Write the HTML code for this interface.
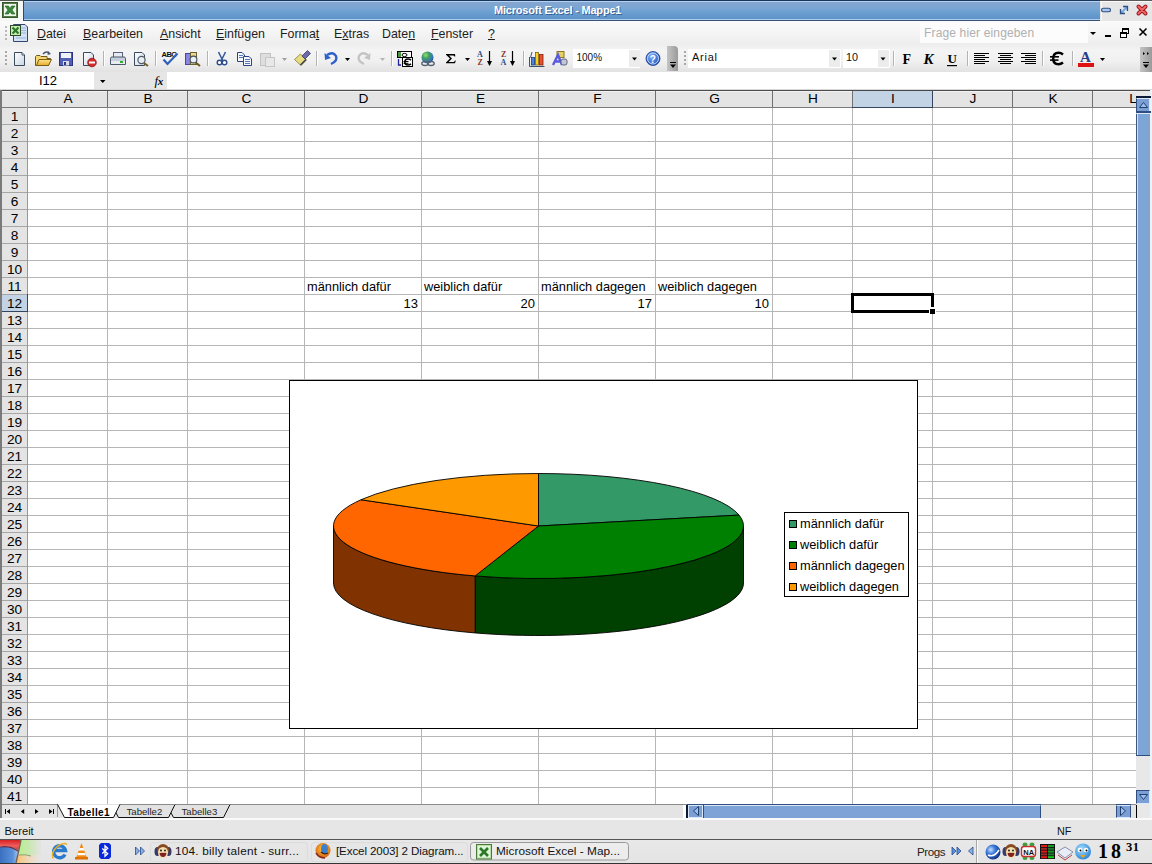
<!DOCTYPE html><html><head><meta charset="utf-8"><style>
*{margin:0;padding:0;box-sizing:border-box}
html,body{width:1152px;height:864px;overflow:hidden;background:#fff;font-family:"Liberation Sans",sans-serif}
.a{position:absolute}
.t{position:absolute;white-space:pre;line-height:1}
</style></head><body>
<div class="a" style="left:0;top:0;width:1152px;height:21px;background:#f4f7f4"></div>
<div class="a" style="left:0;top:0;width:24px;height:1px;background:#505a50"></div>
<div class="a" style="left:23px;top:0;width:1077px;height:21px;background:linear-gradient(#1c3458 0,#1c3458 1px,#b0d4f8 1px,#b0d4f8 2px,#86a6cf 2px,#7aa6d4 8px,#6a9ed0 13px,#5f94ca 18px,#6a90c8 19px,#a8cef2 19px,#a8cef2 20px,#3a5276 20px);border-left:1px solid #2a4876"></div>
<svg class="a" style="left:2px;top:2px" width="16" height="16" viewBox="0 0 16 16">
<rect x="0.5" y="0.5" width="15" height="15" fill="#eef8ea" stroke="#34582a"/>
<rect x="1.5" y="1.5" width="13" height="13" fill="none" stroke="#5a7a4a"/>
<path d="M3 4 L6.5 4 L8 6.5 L9.5 4 L13 4 L10 8 L13 12 L9.5 12 L8 9.5 L6.5 12 L3 12 L6 8 Z" fill="#3a8a3a" stroke="#1e5a1e" stroke-width="0.6"/>
</svg>
<div class="t" style="left:494px;top:5px;font-size:11px;font-weight:bold;color:#fff;text-shadow:1px 1px 0 #3a5f94;letter-spacing:-0.2px">Microsoft Excel - Mappe1</div>
<svg class="a" style="left:1100px;top:0" width="52" height="21" viewBox="1100 0 52 21">
<rect x="1100" y="0" width="52" height="21" fill="#e6e6e6"/>
<rect x="1100" y="0" width="52" height="1" fill="#5a5a5a"/>
<rect x="1100" y="1" width="52" height="1" fill="#fafafa"/><rect x="1101" y="1" width="1" height="19" fill="#fafafa"/>
<rect x="1101.5" y="8.3" width="9" height="3.4" rx="1.7" fill="#a8c8f0" stroke="#2e4e80" stroke-width="1.1"/>
<path d="M1120.5 9 L1120.5 13.5 L1125 13.5 Z" fill="#a8d0f8"/><path d="M1127.5 11 L1127.5 6.5 L1123 6.5 Z" fill="#a8d0f8"/>
<path d="M1121 13 L1127 7" stroke="#78a8e0" stroke-width="2"/>
<path d="M1120.5 9 L1120.5 13.5 L1125 13.5 M1123 6.5 L1127.5 6.5 L1127.5 11" fill="none" stroke="#2e4e80" stroke-width="1.3"/>
<path d="M1138.5 6.5 L1145.5 13.5 M1145.5 6.5 L1138.5 13.5" stroke="#a01820" stroke-width="4" stroke-linecap="round"/>
<path d="M1138.5 6.5 L1145.5 13.5 M1145.5 6.5 L1138.5 13.5" stroke="#f06868" stroke-width="2" stroke-linecap="round"/>
</svg>
<div class="a" style="left:0;top:21px;width:1152px;height:24px;background:linear-gradient(#fafafa,#f4f4f4 50%,#ededed)"></div>
<div class="a" style="left:5px;top:26px;width:2px;height:2px;background:#b8b8b8"></div>
<div class="a" style="left:5px;top:30px;width:2px;height:2px;background:#b8b8b8"></div>
<div class="a" style="left:5px;top:34px;width:2px;height:2px;background:#b8b8b8"></div>
<div class="a" style="left:5px;top:38px;width:2px;height:2px;background:#b8b8b8"></div>
<svg class="a" style="left:9px;top:23px" width="20" height="20" viewBox="0 0 20 20">
<path d="M4.5 1.5 L16 1.5 L18.5 4 L18.5 18.5 L4.5 18.5 Z" fill="#d4e2f6" stroke="#34466e"/>
<path d="M12 5h5M12 7.5h5M12 10h5M7 15h10" stroke="#9ab4dc" stroke-width="1"/>
<rect x="1.5" y="2.5" width="10" height="10" fill="#c8ecb0" stroke="#2e4a26"/>
<path d="M3.5 4.5 L9.5 10.5 M9.5 4.5 L3.5 10.5" stroke="#2a7a2a" stroke-width="2.2"/>
</svg>
<div class="t" style="left:37px;top:28px;font-size:12.4px;color:#1e1e1e"><u>D</u>atei</div>
<div class="t" style="left:83px;top:28px;font-size:12.4px;color:#1e1e1e"><u>B</u>earbeiten</div>
<div class="t" style="left:160px;top:28px;font-size:12.4px;color:#1e1e1e"><u>A</u>nsicht</div>
<div class="t" style="left:216px;top:28px;font-size:12.4px;color:#1e1e1e"><u>E</u>infügen</div>
<div class="t" style="left:280px;top:28px;font-size:12.4px;color:#1e1e1e">Forma<u>t</u></div>
<div class="t" style="left:334px;top:28px;font-size:12.4px;color:#1e1e1e">E<u>x</u>tras</div>
<div class="t" style="left:382px;top:28px;font-size:12.4px;color:#1e1e1e">Date<u>n</u></div>
<div class="t" style="left:431px;top:28px;font-size:12.4px;color:#1e1e1e"><u>F</u>enster</div>
<div class="t" style="left:488px;top:28px;font-size:12.4px;color:#1e1e1e"><u>?</u></div>
<div class="a" style="left:920px;top:23px;width:168px;height:20px;background:#fcfcfc"></div>
<div class="t" style="left:924px;top:27px;font-size:12px;letter-spacing:0.15px;color:#b0b0b0">Frage hier eingeben</div>
<svg class="a" style="left:1086px;top:22px" width="66" height="22" viewBox="0 0 66 22">
<path d="M4 10 L10 10 L7 13 Z" fill="#000"/>
<rect x="19" y="13" width="6" height="2" fill="#000"/>
<rect x="36.5" y="6.5" width="6" height="5" fill="none" stroke="#000"/><rect x="36" y="6" width="7" height="2" fill="#000"/>
<rect x="34.5" y="10.5" width="6" height="5" fill="#fff" stroke="#000"/><rect x="34" y="10" width="7" height="2" fill="#000"/>
<path d="M53.5 6.5 L60.5 13.5 M60.5 6.5 L53.5 13.5" stroke="#000" stroke-width="1.6"/>
</svg>
<div class="a" style="left:0;top:45px;width:1152px;height:27px;background:linear-gradient(#eeeeee,#f4f4f4 20%,#f0f0f0 60%,#e2e2e2)"></div>
<svg class="a" style="left:0;top:45px" width="1152" height="27" viewBox="0 45 1152 27">
<defs><linearGradient id="pg" x1="0" y1="0" x2="1" y2="1"><stop offset="0" stop-color="#ffffff"/><stop offset="1" stop-color="#c9d6e4"/></linearGradient><linearGradient id="fold" x1="0" y1="0" x2="0" y2="1"><stop offset="0" stop-color="#fde58a"/><stop offset="1" stop-color="#e9a92c"/></linearGradient><radialGradient id="glob" cx="0.35" cy="0.3" r="0.8"><stop offset="0" stop-color="#90e070"/><stop offset="0.35" stop-color="#40a060"/><stop offset="0.7" stop-color="#3a78b8"/><stop offset="1" stop-color="#1a4a8a"/></radialGradient><radialGradient id="help" cx="0.4" cy="0.35" r="0.7"><stop offset="0" stop-color="#7fb0ff"/><stop offset="1" stop-color="#1c4fb8"/></radialGradient><linearGradient id="hdl" x1="0" y1="0" x2="1" y2="0"><stop offset="0" stop-color="#c4c4c4"/><stop offset="1" stop-color="#9a9a9a"/></linearGradient></defs>
<rect x="5" y="51" width="2" height="2" fill="#a8a8a8"/>
<rect x="5" y="55" width="2" height="2" fill="#a8a8a8"/>
<rect x="5" y="59" width="2" height="2" fill="#a8a8a8"/>
<rect x="5" y="63" width="2" height="2" fill="#a8a8a8"/>
<rect x="684" y="51" width="2" height="2" fill="#a8a8a8"/>
<rect x="684" y="55" width="2" height="2" fill="#a8a8a8"/>
<rect x="684" y="59" width="2" height="2" fill="#a8a8a8"/>
<rect x="684" y="63" width="2" height="2" fill="#a8a8a8"/>
<rect x="103" y="51" width="1" height="15" fill="#b4b4b4"/><rect x="104" y="51" width="1" height="15" fill="#fff"/>
<rect x="155" y="51" width="1" height="15" fill="#b4b4b4"/><rect x="156" y="51" width="1" height="15" fill="#fff"/>
<rect x="207" y="51" width="1" height="15" fill="#b4b4b4"/><rect x="208" y="51" width="1" height="15" fill="#fff"/>
<rect x="316" y="51" width="1" height="15" fill="#b4b4b4"/><rect x="317" y="51" width="1" height="15" fill="#fff"/>
<rect x="391" y="51" width="1" height="15" fill="#b4b4b4"/><rect x="392" y="51" width="1" height="15" fill="#fff"/>
<rect x="523" y="51" width="1" height="15" fill="#b4b4b4"/><rect x="524" y="51" width="1" height="15" fill="#fff"/>
<rect x="893" y="51" width="1" height="15" fill="#b4b4b4"/><rect x="894" y="51" width="1" height="15" fill="#fff"/>
<rect x="967" y="51" width="1" height="15" fill="#b4b4b4"/><rect x="968" y="51" width="1" height="15" fill="#fff"/>
<rect x="1042" y="51" width="1" height="15" fill="#b4b4b4"/><rect x="1043" y="51" width="1" height="15" fill="#fff"/>
<rect x="1072" y="51" width="1" height="15" fill="#b4b4b4"/><rect x="1073" y="51" width="1" height="15" fill="#fff"/>
<path d="M14.5 52.5 L22 52.5 L24.5 55 L24.5 65.5 L14.5 65.5 Z" fill="url(#pg)" stroke="#3b4b5e"/>
<path d="M22 52.5 L22 55 L24.5 55" fill="#fff" stroke="#3b4b5e"/>
<path d="M35.5 56.5 L35.5 65.5 L48.5 65.5 L50.5 58.5 L47 58.5 L47 56.5 L41 56.5 L40 55.5 L36.5 55.5 Z" fill="#f5d66e" stroke="#6e5a1e"/>
<path d="M36.5 65.5 L39 59.5 L51.5 59.5 L48.5 65.5 Z" fill="url(#fold)" stroke="#7a5e14"/>
<path d="M43 54 Q46 50.5 49 53" fill="none" stroke="#4a5a6a" stroke-width="1.5"/><path d="M48 51 L51 54 L47.5 55 Z" fill="#4a5a6a"/>
<rect x="59.5" y="52.5" width="13" height="13" fill="#5160b4" stroke="#2c3680"/>
<rect x="61" y="53" width="10" height="5" fill="#f0f2fa"/>
<rect x="63" y="61" width="6" height="4.5" fill="#d8dcea"/><rect x="64" y="62" width="2" height="3" fill="#2c3680"/>
<path d="M83.5 52.5 L91 52.5 L93.5 55 L93.5 65.5 L83.5 65.5 Z" fill="url(#pg)" stroke="#3b4b5e"/>
<circle cx="92" cy="62.5" r="4.3" fill="#d42a2a" stroke="#8a1010" stroke-width="0.8"/><rect x="89" y="61.5" width="6" height="2" fill="#fff"/>
<rect x="113.5" y="52.5" width="9" height="5" fill="#e6eaf2" stroke="#5a6478"/>
<path d="M110.5 58.5 Q110.5 57 112 57 L124 57 Q125.5 57 125.5 58.5 L125.5 64.5 L110.5 64.5 Z" fill="#c5cedd" stroke="#4d586c"/>
<rect x="111" y="61" width="14" height="3" fill="#e8ecf2"/><rect x="120" y="61" width="3" height="2" fill="#2fb030"/>
<path d="M134.5 52.5 L142 52.5 L144.5 55 L144.5 65.5 L134.5 65.5 Z" fill="url(#pg)" stroke="#3b4b5e"/>
<line x1="144" y1="63" x2="148" y2="66" stroke="#7a6020" stroke-width="2"/>
<circle cx="141.5" cy="60" r="3.6" fill="#e8eef4" stroke="#505a68" stroke-width="1.2"/>
<text x="161.5" y="56.5" font-family="Liberation Sans" font-weight="bold" font-size="7.6" fill="#111" letter-spacing="-0.6">ABC</text>
<path d="M163.5 59.5 L167.5 64 L177.5 53.5" fill="none" stroke="#3060b8" stroke-width="2.2"/>
<rect x="185.5" y="53.5" width="5" height="11" fill="#8a86e0" stroke="#4a48a0"/>
<rect x="190.5" y="52.5" width="6" height="12" fill="#e8d890" stroke="#6a6030"/>
<line x1="195" y1="62" x2="200" y2="66" stroke="#6a5a18" stroke-width="2"/>
<circle cx="193.5" cy="59.5" r="3.4" fill="#e6eef6" stroke="#4a5060" stroke-width="1.1"/>
<path d="M218.5 52 L223 61 M225.5 52 L221 61" stroke="#3a5a9a" stroke-width="1.6"/>
<circle cx="219.5" cy="62.5" r="2.3" fill="#fff" stroke="#2c4c8c" stroke-width="1.4"/><circle cx="224.5" cy="62.5" r="2.3" fill="#fff" stroke="#2c4c8c" stroke-width="1.4"/>
<path d="M237.5 52.5 L242 52.5 L244.5 55 L244.5 61.5 L237.5 61.5 Z" fill="#f4f8fc" stroke="#2c4480"/>
<path d="M243.5 56.5 L249 56.5 L251.5 59 L251.5 65.5 L243.5 65.5 Z" fill="#f4f8fc" stroke="#2c4480"/>
<path d="M239 55.5h4M239 57.5h4M245 59.5h5M245 61.5h5M245 63.5h5" stroke="#5a76b8" stroke-width="1" shape-rendering="crispEdges"/>
<rect x="260.5" y="53.5" width="10" height="12" fill="#dedede" stroke="#c2c2c2"/><rect x="265.5" y="57.5" width="9" height="9" fill="#e8e8e8" stroke="#c6c6c6"/>
<path d="M282 58 L287 58 L284.5 61 Z" fill="#a0a0a0"/>
<path d="M345 58 L350 58 L347.5 61 Z" fill="#000"/>
<path d="M380 58 L385 58 L382.5 61 Z" fill="#b4b4b4"/>
<path d="M465 58 L470 58 L467.5 61 Z" fill="#000"/>
<path d="M1100 58 L1105 58 L1102.5 61 Z" fill="#000"/>
<path d="M294.5 59.5 L300.5 54 L306.5 60 L301 65.5 Z" fill="#e8dc80" stroke="#8a7a30" stroke-width="0.8"/>
<path d="M301 65.5 L306.5 60 L305.5 59 L300 64.5 Z" fill="#3a3a50"/>
<path d="M302 56 L307.5 50.5 L310.5 53.5 L305 59 Z" fill="#6c6aa8" stroke="#3a3a6a" stroke-width="0.8"/>
<path d="M327 55 Q333 51 336 56 Q338 61 331 64" fill="none" stroke="#2f62c8" stroke-width="2.4"/>
<path d="M324.5 53 L325 60 L331 58 Z" fill="#2f62c8"/>
<path d="M368 55 Q362 51 359 56 Q357 61 364 64" fill="none" stroke="#c4c4c4" stroke-width="2.4"/>
<path d="M370.5 53 L370 60 L364 58 Z" fill="#c4c4c4"/>
<rect x="397.5" y="51.5" width="14" height="6" fill="#fff" stroke="#000"/><rect x="398" y="52" width="3" height="5" fill="#4a9a40"/><ellipse cx="404.5" cy="55" rx="2.5" ry="1.6" fill="none" stroke="#000"/>
<rect x="402.5" y="57.5" width="10" height="9" fill="#fff" stroke="#000"/>
<path d="M411 60 Q409.5 59 408 59 Q404.8 59 404.8 62 Q404.8 65 408 65 Q409.5 65 411 64" fill="none" stroke="#000" stroke-width="1.6"/><rect x="403.5" y="61" width="5" height="1" fill="#000"/><rect x="403.5" y="62.8" width="5" height="1" fill="#000"/>
<path d="M398.5 59 L398.5 65 L401 65" fill="none" stroke="#2020a0" stroke-width="1.3"/>
<circle cx="427.5" cy="57.5" r="6" fill="url(#glob)"/>
<ellipse cx="425" cy="63.5" rx="3.2" ry="2" fill="none" stroke="#556070" stroke-width="1.3"/><ellipse cx="431" cy="63.5" rx="3.2" ry="2" fill="none" stroke="#556070" stroke-width="1.3"/>
<path d="M446 54 L455 54 L455.3 56.5 L454.5 56.5 L453.5 55.5 L449 55.5 L452 58.6 L448.5 62 L454 62 L455 60.5 L455.8 60.5 L455 63.3 L446 63.3 L446 62.5 L450 58.6 L446 54.8 Z" fill="#000"/>
<text x="477" y="57.3" font-family="Liberation Serif" font-weight="bold" font-size="8" fill="#2c4a8a">A</text>
<text x="477.5" y="65.3" font-family="Liberation Serif" font-weight="bold" font-size="8" fill="#8a3a2a">Z</text>
<path d="M489.5 51 L489.5 65" stroke="#000" stroke-width="1.2"/><path d="M487 61 L489.5 66 L492 61" fill="#000"/>
<text x="501" y="57.3" font-family="Liberation Serif" font-weight="bold" font-size="8" fill="#8a3a2a">Z</text>
<text x="500.5" y="65.3" font-family="Liberation Serif" font-weight="bold" font-size="8" fill="#2c4a8a">A</text>
<path d="M512.5 51 L512.5 65" stroke="#000" stroke-width="1.2"/><path d="M510 61 L512.5 66 L515 61" fill="#000"/>
<path d="M529.5 57 L529.5 66.5 L544.5 66.5" fill="none" stroke="#40506a"/><path d="M530.5 57.5 L532 52" stroke="#40506a"/>
<rect x="531.5" y="57.5" width="3" height="7.5" fill="#4a88e0" stroke="#1a3a7a" stroke-width="0.8"/><rect x="535.5" y="52.5" width="3" height="12.5" fill="#f8d020" stroke="#806010" stroke-width="0.8"/><rect x="539.5" y="54.5" width="3.5" height="10.5" fill="#e85030" stroke="#802010" stroke-width="0.8"/>
<rect x="557" y="51.5" width="7" height="6" fill="#e6d060" stroke="#8a7a20"/>
<path d="M553 65 L558 55 L562 65 M555 61.5 L560.5 61.5" fill="none" stroke="#5a5ae0" stroke-width="2.4"/>
<rect x="561" y="59" width="6" height="6" rx="2" fill="#c0c8d8" stroke="#606878"/>
<rect x="573" y="49" width="67" height="19" fill="#fff"/><rect x="629" y="50" width="11" height="17" fill="#ececec"/>
<path d="M632 57.5 L637 57.5 L634.5 60.5 Z" fill="#000"/>
<text x="576.5" y="61" font-family="Liberation Sans" font-size="11" textLength="25.5" lengthAdjust="spacingAndGlyphs" fill="#111">100%</text>
<circle cx="653" cy="58.5" r="7" fill="url(#help)" stroke="#1a3c8c" stroke-width="0.8"/>
<circle cx="653" cy="58.5" r="5.5" fill="none" stroke="#cfe0ff" stroke-width="0.9"/>
<text x="649.7" y="62.5" font-family="Liberation Sans" font-weight="bold" font-size="10" fill="#fff">?</text>
<path d="M667 46 L674 46 Q678 46 678 50 L678 71 L667 71 Z" fill="url(#hdl)"/>
<rect x="670" y="62" width="6" height="1" fill="#000"/><path d="M670 64.5 L676 64.5 L673 68 Z" fill="#000"/>
<rect x="688" y="49" width="153" height="19" fill="#fff"/><rect x="829" y="50" width="11" height="17" fill="#ececec"/>
<path d="M832 57.5 L837 57.5 L834.5 60.5 Z" fill="#000"/>
<text x="692" y="61" font-family="Liberation Sans" font-size="11" textLength="25" lengthAdjust="spacing" fill="#111">Arial</text>
<rect x="843" y="49" width="47" height="19" fill="#fff"/><rect x="878" y="50" width="11" height="17" fill="#ececec"/>
<path d="M880.5 57.5 L885.5 57.5 L883 60.5 Z" fill="#000"/>
<text x="846" y="61" font-family="Liberation Sans" font-size="11" textLength="12" lengthAdjust="spacingAndGlyphs" fill="#111">10</text>
<text x="902.5" y="64" font-family="Liberation Serif" font-weight="bold" font-size="14" fill="#000">F</text>
<text x="923.5" y="64" font-family="Liberation Serif" font-weight="bold" font-style="italic" font-size="15" fill="#000">K</text>
<text x="947.5" y="63" font-family="Liberation Serif" font-weight="bold" font-size="13" fill="#000">U</text><rect x="947" y="65" width="10" height="1.2" fill="#000"/>
<rect x="974" y="53" width="15" height="1" fill="#000"/><rect x="974" y="55" width="11" height="1" fill="#000"/><rect x="974" y="57" width="15" height="1" fill="#000"/><rect x="974" y="59" width="11" height="1" fill="#000"/><rect x="974" y="61" width="15" height="1" fill="#000"/><rect x="974" y="63" width="11" height="1" fill="#000"/>
<rect x="998" y="53" width="15" height="1" fill="#000"/><rect x="1000" y="55" width="11" height="1" fill="#000"/><rect x="998" y="57" width="15" height="1" fill="#000"/><rect x="1000" y="59" width="11" height="1" fill="#000"/><rect x="998" y="61" width="15" height="1" fill="#000"/><rect x="1000" y="63" width="11" height="1" fill="#000"/>
<rect x="1021" y="53" width="15" height="1" fill="#000"/><rect x="1025" y="55" width="11" height="1" fill="#000"/><rect x="1021" y="57" width="15" height="1" fill="#000"/><rect x="1025" y="59" width="11" height="1" fill="#000"/><rect x="1021" y="61" width="15" height="1" fill="#000"/><rect x="1025" y="63" width="11" height="1" fill="#000"/>
<path d="M1063 54.5 Q1061 52.8 1058.5 52.8 Q1053.2 52.8 1053.2 58.5 Q1053.2 64.2 1058.5 64.2 Q1061 64.2 1063 62.5" fill="none" stroke="#000" stroke-width="2.4"/>
<rect x="1050" y="56" width="9" height="1.6" fill="#000"/><rect x="1050" y="59.3" width="8.5" height="1.6" fill="#000"/>
<text x="1080" y="62" font-family="Liberation Serif" font-weight="bold" font-size="15" fill="#283c8c">A</text>
<rect x="1078" y="63" width="16" height="4" fill="#e01010"/>
<path d="M1140 47 L1152 47 L1152 72 L1140 72 Q1140 72 1140 70 Z" fill="url(#hdl)"/>
<path d="M1143 52 L1145 53.5 L1143 55 Z M1147 52 L1149 53.5 L1147 55 Z" fill="#000"/>
<rect x="1143" y="62" width="6" height="1" fill="#000"/><path d="M1143 64.5 L1149 64.5 L1146 68 Z" fill="#000"/>
</svg>
<div class="a" style="left:0;top:72px;width:1152px;height:18px;background:#fff"></div>
<div class="a" style="left:94px;top:72px;width:73px;height:17px;background:#e6e6e6"></div>
<div class="a" style="left:0;top:89px;width:1152px;height:1px;background:#d8d8d8"></div>
<div class="t" style="left:39px;top:74px;font-size:13px;color:#000">I12</div>
<svg class="a" style="left:100px;top:80px" width="6" height="4"><path d="M0 0 L5.5 0 L2.75 3 Z" fill="#000"/></svg>
<div class="t" style="left:154.5px;top:74px;font-size:13px;font-style:italic;font-family:'Liberation Serif',serif;color:#000">f<span style="font-size:11px;font-weight:bold;margin-left:-0.5px">x</span></div>
<svg class="a" style="left:0;top:90px" width="1152" height="714" viewBox="0 90 1152 714" shape-rendering="crispEdges">
<rect x="0" y="91" width="1136" height="16" fill="#e4e4e4"/>
<rect x="0" y="91" width="1136" height="1" fill="#f2f2f2"/>
<rect x="0" y="108" width="27" height="696" fill="#e4e4e4"/>
<rect x="853" y="91" width="79" height="16" fill="#c3d3e6"/>
<rect x="2" y="295" width="25" height="16" fill="#c3d3e6"/>
<rect x="0" y="90" width="1151" height="1" fill="#4a4a4a"/>
<rect x="0" y="90" width="2" height="714" fill="#7a7a7a"/>
<rect x="2" y="124" width="25" height="1" fill="#a6a6a6"/>
<rect x="28" y="124" width="1108" height="1" fill="#b6b6b6"/>
<rect x="2" y="141" width="25" height="1" fill="#a6a6a6"/>
<rect x="28" y="141" width="1108" height="1" fill="#b6b6b6"/>
<rect x="2" y="158" width="25" height="1" fill="#a6a6a6"/>
<rect x="28" y="158" width="1108" height="1" fill="#b6b6b6"/>
<rect x="2" y="175" width="25" height="1" fill="#a6a6a6"/>
<rect x="28" y="175" width="1108" height="1" fill="#b6b6b6"/>
<rect x="2" y="192" width="25" height="1" fill="#a6a6a6"/>
<rect x="28" y="192" width="1108" height="1" fill="#b6b6b6"/>
<rect x="2" y="209" width="25" height="1" fill="#a6a6a6"/>
<rect x="28" y="209" width="1108" height="1" fill="#b6b6b6"/>
<rect x="2" y="226" width="25" height="1" fill="#a6a6a6"/>
<rect x="28" y="226" width="1108" height="1" fill="#b6b6b6"/>
<rect x="2" y="243" width="25" height="1" fill="#a6a6a6"/>
<rect x="28" y="243" width="1108" height="1" fill="#b6b6b6"/>
<rect x="2" y="260" width="25" height="1" fill="#a6a6a6"/>
<rect x="28" y="260" width="1108" height="1" fill="#b6b6b6"/>
<rect x="2" y="277" width="25" height="1" fill="#a6a6a6"/>
<rect x="28" y="277" width="1108" height="1" fill="#b6b6b6"/>
<rect x="2" y="294" width="25" height="1" fill="#a6a6a6"/>
<rect x="28" y="294" width="1108" height="1" fill="#b6b6b6"/>
<rect x="2" y="311" width="25" height="1" fill="#a6a6a6"/>
<rect x="28" y="311" width="1108" height="1" fill="#b6b6b6"/>
<rect x="2" y="328" width="25" height="1" fill="#a6a6a6"/>
<rect x="28" y="328" width="1108" height="1" fill="#b6b6b6"/>
<rect x="2" y="345" width="25" height="1" fill="#a6a6a6"/>
<rect x="28" y="345" width="1108" height="1" fill="#b6b6b6"/>
<rect x="2" y="362" width="25" height="1" fill="#a6a6a6"/>
<rect x="28" y="362" width="1108" height="1" fill="#b6b6b6"/>
<rect x="2" y="379" width="25" height="1" fill="#a6a6a6"/>
<rect x="28" y="379" width="1108" height="1" fill="#b6b6b6"/>
<rect x="2" y="396" width="25" height="1" fill="#a6a6a6"/>
<rect x="28" y="396" width="1108" height="1" fill="#b6b6b6"/>
<rect x="2" y="413" width="25" height="1" fill="#a6a6a6"/>
<rect x="28" y="413" width="1108" height="1" fill="#b6b6b6"/>
<rect x="2" y="430" width="25" height="1" fill="#a6a6a6"/>
<rect x="28" y="430" width="1108" height="1" fill="#b6b6b6"/>
<rect x="2" y="447" width="25" height="1" fill="#a6a6a6"/>
<rect x="28" y="447" width="1108" height="1" fill="#b6b6b6"/>
<rect x="2" y="464" width="25" height="1" fill="#a6a6a6"/>
<rect x="28" y="464" width="1108" height="1" fill="#b6b6b6"/>
<rect x="2" y="481" width="25" height="1" fill="#a6a6a6"/>
<rect x="28" y="481" width="1108" height="1" fill="#b6b6b6"/>
<rect x="2" y="498" width="25" height="1" fill="#a6a6a6"/>
<rect x="28" y="498" width="1108" height="1" fill="#b6b6b6"/>
<rect x="2" y="515" width="25" height="1" fill="#a6a6a6"/>
<rect x="28" y="515" width="1108" height="1" fill="#b6b6b6"/>
<rect x="2" y="532" width="25" height="1" fill="#a6a6a6"/>
<rect x="28" y="532" width="1108" height="1" fill="#b6b6b6"/>
<rect x="2" y="549" width="25" height="1" fill="#a6a6a6"/>
<rect x="28" y="549" width="1108" height="1" fill="#b6b6b6"/>
<rect x="2" y="566" width="25" height="1" fill="#a6a6a6"/>
<rect x="28" y="566" width="1108" height="1" fill="#b6b6b6"/>
<rect x="2" y="583" width="25" height="1" fill="#a6a6a6"/>
<rect x="28" y="583" width="1108" height="1" fill="#b6b6b6"/>
<rect x="2" y="600" width="25" height="1" fill="#a6a6a6"/>
<rect x="28" y="600" width="1108" height="1" fill="#b6b6b6"/>
<rect x="2" y="617" width="25" height="1" fill="#a6a6a6"/>
<rect x="28" y="617" width="1108" height="1" fill="#b6b6b6"/>
<rect x="2" y="634" width="25" height="1" fill="#a6a6a6"/>
<rect x="28" y="634" width="1108" height="1" fill="#b6b6b6"/>
<rect x="2" y="651" width="25" height="1" fill="#a6a6a6"/>
<rect x="28" y="651" width="1108" height="1" fill="#b6b6b6"/>
<rect x="2" y="668" width="25" height="1" fill="#a6a6a6"/>
<rect x="28" y="668" width="1108" height="1" fill="#b6b6b6"/>
<rect x="2" y="685" width="25" height="1" fill="#a6a6a6"/>
<rect x="28" y="685" width="1108" height="1" fill="#b6b6b6"/>
<rect x="2" y="702" width="25" height="1" fill="#a6a6a6"/>
<rect x="28" y="702" width="1108" height="1" fill="#b6b6b6"/>
<rect x="2" y="719" width="25" height="1" fill="#a6a6a6"/>
<rect x="28" y="719" width="1108" height="1" fill="#b6b6b6"/>
<rect x="2" y="736" width="25" height="1" fill="#a6a6a6"/>
<rect x="28" y="736" width="1108" height="1" fill="#b6b6b6"/>
<rect x="2" y="753" width="25" height="1" fill="#a6a6a6"/>
<rect x="28" y="753" width="1108" height="1" fill="#b6b6b6"/>
<rect x="2" y="770" width="25" height="1" fill="#a6a6a6"/>
<rect x="28" y="770" width="1108" height="1" fill="#b6b6b6"/>
<rect x="2" y="787" width="25" height="1" fill="#a6a6a6"/>
<rect x="28" y="787" width="1108" height="1" fill="#b6b6b6"/>
<rect x="2" y="804" width="25" height="1" fill="#a6a6a6"/>
<rect x="28" y="804" width="1108" height="1" fill="#b6b6b6"/>
<rect x="0" y="107" width="1136" height="1" fill="#7a7a7a"/>
<rect x="27" y="91" width="1" height="713" fill="#989898"/>
<rect x="107" y="91" width="1" height="16" fill="#707070"/>
<rect x="107" y="108" width="1" height="696" fill="#b6b6b6"/>
<rect x="187" y="91" width="1" height="16" fill="#707070"/>
<rect x="187" y="108" width="1" height="696" fill="#b6b6b6"/>
<rect x="304" y="91" width="1" height="16" fill="#707070"/>
<rect x="304" y="108" width="1" height="696" fill="#b6b6b6"/>
<rect x="421" y="91" width="1" height="16" fill="#707070"/>
<rect x="421" y="108" width="1" height="696" fill="#b6b6b6"/>
<rect x="538" y="91" width="1" height="16" fill="#707070"/>
<rect x="538" y="108" width="1" height="696" fill="#b6b6b6"/>
<rect x="655" y="91" width="1" height="16" fill="#707070"/>
<rect x="655" y="108" width="1" height="696" fill="#b6b6b6"/>
<rect x="772" y="91" width="1" height="16" fill="#707070"/>
<rect x="772" y="108" width="1" height="696" fill="#b6b6b6"/>
<rect x="852" y="91" width="1" height="16" fill="#707070"/>
<rect x="852" y="108" width="1" height="696" fill="#b6b6b6"/>
<rect x="932" y="91" width="1" height="16" fill="#707070"/>
<rect x="932" y="108" width="1" height="696" fill="#b6b6b6"/>
<rect x="1012" y="91" width="1" height="16" fill="#707070"/>
<rect x="1012" y="108" width="1" height="696" fill="#b6b6b6"/>
<rect x="1092" y="91" width="1" height="16" fill="#707070"/>
<rect x="1092" y="108" width="1" height="696" fill="#b6b6b6"/>
<rect x="852" y="107" width="81" height="1" fill="#34455e"/>
<rect x="932" y="91" width="1" height="17" fill="#34455e"/>
<rect x="27" y="294" width="1" height="18" fill="#34455e"/>
<rect x="2" y="311" width="26" height="1" fill="#34455e"/>
</svg>
<div class="t" style="left:28px;top:92px;width:80px;text-align:center;font-size:13.7px;color:#000">A</div>
<div class="t" style="left:108px;top:92px;width:80px;text-align:center;font-size:13.7px;color:#000">B</div>
<div class="t" style="left:188px;top:92px;width:117px;text-align:center;font-size:13.7px;color:#000">C</div>
<div class="t" style="left:305px;top:92px;width:117px;text-align:center;font-size:13.7px;color:#000">D</div>
<div class="t" style="left:422px;top:92px;width:117px;text-align:center;font-size:13.7px;color:#000">E</div>
<div class="t" style="left:539px;top:92px;width:117px;text-align:center;font-size:13.7px;color:#000">F</div>
<div class="t" style="left:656px;top:92px;width:117px;text-align:center;font-size:13.7px;color:#000">G</div>
<div class="t" style="left:773px;top:92px;width:80px;text-align:center;font-size:13.7px;color:#000">H</div>
<div class="t" style="left:853px;top:92px;width:80px;text-align:center;font-size:13.7px;color:#000">I</div>
<div class="t" style="left:933px;top:92px;width:80px;text-align:center;font-size:13.7px;color:#000">J</div>
<div class="t" style="left:1013px;top:92px;width:80px;text-align:center;font-size:13.7px;color:#000">K</div>
<div class="t" style="left:1093px;top:92px;width:80px;text-align:center;font-size:13.7px;color:#000">L</div>
<div class="t" style="left:1px;top:110px;width:27px;text-align:center;font-size:13.7px;color:#000">1</div>
<div class="t" style="left:1px;top:127px;width:27px;text-align:center;font-size:13.7px;color:#000">2</div>
<div class="t" style="left:1px;top:144px;width:27px;text-align:center;font-size:13.7px;color:#000">3</div>
<div class="t" style="left:1px;top:161px;width:27px;text-align:center;font-size:13.7px;color:#000">4</div>
<div class="t" style="left:1px;top:178px;width:27px;text-align:center;font-size:13.7px;color:#000">5</div>
<div class="t" style="left:1px;top:195px;width:27px;text-align:center;font-size:13.7px;color:#000">6</div>
<div class="t" style="left:1px;top:212px;width:27px;text-align:center;font-size:13.7px;color:#000">7</div>
<div class="t" style="left:1px;top:229px;width:27px;text-align:center;font-size:13.7px;color:#000">8</div>
<div class="t" style="left:1px;top:246px;width:27px;text-align:center;font-size:13.7px;color:#000">9</div>
<div class="t" style="left:1px;top:263px;width:27px;text-align:center;font-size:13.7px;color:#000">10</div>
<div class="t" style="left:1px;top:280px;width:27px;text-align:center;font-size:13.7px;color:#000">11</div>
<div class="t" style="left:1px;top:297px;width:27px;text-align:center;font-size:13.7px;color:#000">12</div>
<div class="t" style="left:1px;top:314px;width:27px;text-align:center;font-size:13.7px;color:#000">13</div>
<div class="t" style="left:1px;top:331px;width:27px;text-align:center;font-size:13.7px;color:#000">14</div>
<div class="t" style="left:1px;top:348px;width:27px;text-align:center;font-size:13.7px;color:#000">15</div>
<div class="t" style="left:1px;top:365px;width:27px;text-align:center;font-size:13.7px;color:#000">16</div>
<div class="t" style="left:1px;top:382px;width:27px;text-align:center;font-size:13.7px;color:#000">17</div>
<div class="t" style="left:1px;top:399px;width:27px;text-align:center;font-size:13.7px;color:#000">18</div>
<div class="t" style="left:1px;top:416px;width:27px;text-align:center;font-size:13.7px;color:#000">19</div>
<div class="t" style="left:1px;top:433px;width:27px;text-align:center;font-size:13.7px;color:#000">20</div>
<div class="t" style="left:1px;top:450px;width:27px;text-align:center;font-size:13.7px;color:#000">21</div>
<div class="t" style="left:1px;top:467px;width:27px;text-align:center;font-size:13.7px;color:#000">22</div>
<div class="t" style="left:1px;top:484px;width:27px;text-align:center;font-size:13.7px;color:#000">23</div>
<div class="t" style="left:1px;top:501px;width:27px;text-align:center;font-size:13.7px;color:#000">24</div>
<div class="t" style="left:1px;top:518px;width:27px;text-align:center;font-size:13.7px;color:#000">25</div>
<div class="t" style="left:1px;top:535px;width:27px;text-align:center;font-size:13.7px;color:#000">26</div>
<div class="t" style="left:1px;top:552px;width:27px;text-align:center;font-size:13.7px;color:#000">27</div>
<div class="t" style="left:1px;top:569px;width:27px;text-align:center;font-size:13.7px;color:#000">28</div>
<div class="t" style="left:1px;top:586px;width:27px;text-align:center;font-size:13.7px;color:#000">29</div>
<div class="t" style="left:1px;top:603px;width:27px;text-align:center;font-size:13.7px;color:#000">30</div>
<div class="t" style="left:1px;top:620px;width:27px;text-align:center;font-size:13.7px;color:#000">31</div>
<div class="t" style="left:1px;top:637px;width:27px;text-align:center;font-size:13.7px;color:#000">32</div>
<div class="t" style="left:1px;top:654px;width:27px;text-align:center;font-size:13.7px;color:#000">33</div>
<div class="t" style="left:1px;top:671px;width:27px;text-align:center;font-size:13.7px;color:#000">34</div>
<div class="t" style="left:1px;top:688px;width:27px;text-align:center;font-size:13.7px;color:#000">35</div>
<div class="t" style="left:1px;top:705px;width:27px;text-align:center;font-size:13.7px;color:#000">36</div>
<div class="t" style="left:1px;top:722px;width:27px;text-align:center;font-size:13.7px;color:#000">37</div>
<div class="t" style="left:1px;top:739px;width:27px;text-align:center;font-size:13.7px;color:#000">38</div>
<div class="t" style="left:1px;top:756px;width:27px;text-align:center;font-size:13.7px;color:#000">39</div>
<div class="t" style="left:1px;top:773px;width:27px;text-align:center;font-size:13.7px;color:#000">40</div>
<div class="t" style="left:1px;top:790px;width:27px;text-align:center;font-size:13.7px;color:#000">41</div>
<div class="t" style="left:307px;top:281px;font-size:12.8px;color:#000">männlich dafür</div>
<div class="t" style="left:424px;top:281px;font-size:12.8px;color:#000">weiblich dafür</div>
<div class="t" style="left:541px;top:281px;font-size:12.8px;color:#000">männlich dagegen</div>
<div class="t" style="left:658px;top:281px;font-size:12.8px;color:#000">weiblich dagegen</div>
<div class="t" style="left:318px;top:297px;width:100px;text-align:right;font-size:13px;color:#000">13</div>
<div class="t" style="left:435px;top:297px;width:100px;text-align:right;font-size:13px;color:#000">20</div>
<div class="t" style="left:552px;top:297px;width:100px;text-align:right;font-size:13px;color:#000">17</div>
<div class="t" style="left:669px;top:297px;width:100px;text-align:right;font-size:13px;color:#000">10</div>
<div class="a" style="left:851px;top:293px;width:83px;height:20px;border:3px solid #000"></div>
<div class="a" style="left:929px;top:307px;width:7px;height:7px;background:#fff"></div>
<div class="a" style="left:930px;top:309px;width:5px;height:5px;background:#000"></div>
<svg class="a" style="left:289px;top:380px" width="629" height="349" viewBox="289 380 629 349">
<rect x="289.5" y="380.5" width="628" height="348" fill="#fff" stroke="#000"/>
<path d="M743.50 526.00 A205 52.5 0 0 1 475.15 575.93 L475.15 632.93 A205 52.5 0 0 0 743.50 583.00 Z" fill="#004000" stroke="#000" stroke-width="0.9" stroke-linejoin="round"/>
<path d="M475.15 575.93 A205 52.5 0 0 1 333.50 526.00 L333.50 583.00 A205 52.5 0 0 0 475.15 632.93 Z" fill="#803300" stroke="#000" stroke-width="0.9" stroke-linejoin="round"/>
<path d="M538.5 526 L538.50 473.50 A205 52.5 0 0 1 739.02 515.08 Z" fill="#339966" stroke="#000" stroke-width="0.9" stroke-linejoin="round"/>
<path d="M538.5 526 L739.02 515.08 A205 52.5 0 0 1 475.15 575.93 Z" fill="#008000" stroke="#000" stroke-width="0.9" stroke-linejoin="round"/>
<path d="M538.5 526 L475.15 575.93 A205 52.5 0 0 1 360.96 499.75 Z" fill="#ff6600" stroke="#000" stroke-width="0.9" stroke-linejoin="round"/>
<path d="M538.5 526 L360.96 499.75 A205 52.5 0 0 1 538.50 473.50 Z" fill="#ff9900" stroke="#000" stroke-width="0.9" stroke-linejoin="round"/>
<rect x="784.5" y="512.5" width="124" height="84" fill="#fff" stroke="#000"/>
<rect x="789.5" y="520.5" width="7" height="7" fill="#339966" stroke="#000"/>
<text x="800" y="528" font-family="Liberation Sans" font-size="12.8" fill="#000">männlich dafür</text>
<rect x="789.5" y="541.5" width="7" height="7" fill="#008000" stroke="#000"/>
<text x="800" y="549" font-family="Liberation Sans" font-size="12.8" fill="#000">weiblich dafür</text>
<rect x="789.5" y="562.5" width="7" height="7" fill="#ff6600" stroke="#000"/>
<text x="800" y="570" font-family="Liberation Sans" font-size="12.8" fill="#000">männlich dagegen</text>
<rect x="789.5" y="583.5" width="7" height="7" fill="#ff9900" stroke="#000"/>
<text x="800" y="591" font-family="Liberation Sans" font-size="12.8" fill="#000">weiblich dagegen</text>
</svg>
<div class="a" style="left:1136px;top:91px;width:16px;height:728px;background:#e8e8e8"></div>
<div class="a" style="left:1150px;top:90px;width:2px;height:729px;background:#eaf2fa"></div>
<div class="a" style="left:1136px;top:96px;width:15px;height:2px;background:#0c1c36"></div>
<div class="a" style="left:1136px;top:98px;width:14px;height:14px;background:#7b9fd4;border:1px solid #dbe8fa;border-left:1px solid #2f4e80"></div>
<svg class="a" style="left:1139px;top:101px" width="10" height="8"><path d="M0.5 6.5 L4.5 1.5 L8.5 6.5 Z" fill="#9cc0ee" stroke="#22406e"/></svg>
<div class="a" style="left:1136px;top:111px;width:15px;height:2px;background:#2f4e80"></div>
<div class="a" style="left:1136px;top:113px;width:14px;height:643px;background:linear-gradient(90deg,#3a5878 0,#3a5878 1px,#c8e4fc 1px,#c8e4fc 2px,#84a0dc 2px,#78a8d4 8px,#7ca4d8 12px,#8aa0c8 12px);border-top:1px solid #dbe8fa;border-bottom:1px solid #2f4e80"></div>
<div class="a" style="left:1136px;top:790px;width:14px;height:14px;background:#7b9fd4;border:1px solid #dbe8fa;border-left:1px solid #2f4e80;border-top:1px solid #2f4e80"></div>
<svg class="a" style="left:1139px;top:793px" width="10" height="8"><path d="M0.5 1.5 L4.5 6.5 L8.5 1.5 Z" fill="#9cc0ee" stroke="#22406e"/></svg>
<div class="a" style="left:0;top:804px;width:1136px;height:14px;background:#e4e4e4;border-top:1px solid #8a8a8a"></div>
<div class="a" style="left:0;top:804px;width:2px;height:14px;background:#7a7a7a"></div>
<div class="a" style="left:683px;top:805px;width:3px;height:13px;background:#fff"></div>
<div class="a" style="left:686px;top:805px;width:2px;height:13px;background:#0c1c36"></div>
<div class="a" style="left:688px;top:805px;width:15px;height:13px;background:#7b9fd4;border:1px solid #dbe8fa"></div>
<svg class="a" style="left:691px;top:806px" width="10" height="11"><path d="M7.5 0.5 L2.5 5 L7.5 9.5 Z" fill="#9cc0ee" stroke="#22406e"/></svg>
<div class="a" style="left:703px;top:805px;width:1px;height:13px;background:#2f4e80"></div>
<div class="a" style="left:704px;top:805px;width:337px;height:13px;background:#7ea3d6;border-top:1px solid #dbe8fa;border-right:1px solid #2f4e80"></div>
<div class="a" style="left:1116px;top:805px;width:15px;height:13px;background:#7b9fd4;border:1px solid #dbe8fa;border-left:1px solid #2f4e80;border-right:1px solid #2f4e80"></div>
<svg class="a" style="left:1118px;top:806px" width="10" height="11"><path d="M2.5 0.5 L7.5 5 L2.5 9.5 Z" fill="#9cc0ee" stroke="#22406e"/></svg>
<div class="a" style="left:1136px;top:805px;width:1px;height:13px;background:#000"></div>
<div class="a" style="left:687px;top:804px;width:354px;height:1px;background:#2f4e80"></div>
<div class="a" style="left:1116px;top:804px;width:15px;height:1px;background:#2f4e80"></div>
<svg class="a" style="left:0;top:804px" width="240" height="15" viewBox="0 804 240 15" shape-rendering="geometricPrecision">
<path d="M5 809 L6 809 L6 814 L5 814 Z M6.5 811.5 L10 809 L10 814 Z" fill="#000"/>
<path d="M24.2 809 L20.8 811.5 L24.2 814 Z" fill="#000"/>
<path d="M35 809 L38.5 811.5 L35 814 Z" fill="#000"/>
<path d="M49 809 L52.5 811.5 L49 814 Z M53 809 L54 809 L54 814 L53 814 Z" fill="#000"/>
<rect x="57" y="805" width="1" height="12" fill="#9a9a9a"/>
<path d="M166.5 804.5 L173.5 817.5 L223.5 817.5 L230 804.5" fill="#e2e2e2" stroke="#111" stroke-width="1"/>
<path d="M166.5 804.5 L230 804.5" stroke="#8a8a8a"/>
<path d="M111.5 804.5 L118.5 817.5 L168.5 817.5 L175 804.5" fill="#e2e2e2" stroke="#111" stroke-width="1"/>
<path d="M111.5 804.5 L175 804.5" stroke="#8a8a8a"/>
<path d="M57.5 804.3 L64.5 817.5 L113.5 817.5 L120 804.3 Z" fill="#fff"/>
<path d="M57.5 804.3 L64.5 817.5 L113.5 817.5 L120 804.3" fill="none" stroke="#111" stroke-width="1"/>
</svg>
<div class="t" style="left:67.5px;top:807.5px;font-size:10px;letter-spacing:0.4px;font-weight:bold;color:#000">Tabelle1</div>
<div class="t" style="left:126.5px;top:807px;font-size:9.6px;color:#222">Tabelle2</div>
<div class="t" style="left:181.5px;top:807px;font-size:9.6px;color:#222">Tabelle3</div>
<div class="a" style="left:0;top:818px;width:1152px;height:2px;background:#fafafa"></div>
<div class="a" style="left:0;top:820px;width:1152px;height:19px;background:#e6e6e6"></div>
<div class="t" style="left:4.5px;top:826px;font-size:11.2px;color:#111">Bereit</div>
<div class="t" style="left:1057px;top:826px;font-size:10.8px;color:#111">NF</div>
<div class="a" style="left:0;top:839px;width:1152px;height:25px;background:linear-gradient(#555 0,#555 1px,#e8e8e8 1px,#e4e4e4 24px,#333 24px)"></div>
<svg class="a" style="left:0;top:839px" width="1152" height="25" viewBox="0 839 1152 25">
<defs><radialGradient id="ie" cx="0.4" cy="0.4" r="0.7"><stop offset="0" stop-color="#9fd8ff"/><stop offset="1" stop-color="#1a6ad0"/></radialGradient><radialGradient id="ff" cx="0.5" cy="0.4" r="0.7"><stop offset="0" stop-color="#ffcc40"/><stop offset="1" stop-color="#d0500a"/></radialGradient><radialGradient id="sph" cx="0.35" cy="0.35" r="0.75"><stop offset="0" stop-color="#c8e0ff"/><stop offset="0.4" stop-color="#3a78d8"/><stop offset="1" stop-color="#0a2a7a"/></radialGradient><radialGradient id="bird" cx="0.4" cy="0.35" r="0.75"><stop offset="0" stop-color="#a8e0ff"/><stop offset="1" stop-color="#1a7ad0"/></radialGradient></defs>
<defs><linearGradient id="fadeg" x1="0" y1="0" x2="1" y2="0"><stop offset="0" stop-color="#b8f090"/><stop offset="0.45" stop-color="#c8e8b0"/><stop offset="1" stop-color="#e4e4e4"/></linearGradient><linearGradient id="fadey" x1="0" y1="0" x2="1" y2="0"><stop offset="0" stop-color="#f8c070"/><stop offset="0.5" stop-color="#f0d8b8"/><stop offset="1" stop-color="#e4e4e4"/></linearGradient><linearGradient id="redg" x1="0" y1="0" x2="0" y2="1"><stop offset="0" stop-color="#d82020"/><stop offset="0.6" stop-color="#f06060"/><stop offset="1" stop-color="#c83838"/></linearGradient><linearGradient id="blug" x1="0" y1="0" x2="1" y2="0"><stop offset="0" stop-color="#3a70c0"/><stop offset="0.7" stop-color="#5a90d8"/><stop offset="1" stop-color="#a8c8f0"/></linearGradient></defs>
<rect x="19" y="840" width="22" height="16" fill="url(#fadeg)"/>
<rect x="16" y="855" width="24" height="8" fill="url(#fadey)"/>
<path d="M0 840 L20.5 840 L18.5 850 Q10 845 0 846.5 Z" fill="url(#redg)"/>
<path d="M0 847 Q10 845.5 18.3 851 L16 863 L0 863 Z" fill="url(#blug)"/>
<path d="M0 847 Q10 845.5 18.3 851" fill="none" stroke="#6a2a40" stroke-width="1.2"/>
<path d="M21 840 L16 863" stroke="#7a6050" stroke-width="1.4"/>
<path d="M19 855 Q25 854 31 856" fill="none" stroke="#90a070" stroke-width="1"/>
<path d="M65 854.5 A6 6 0 1 1 65.5 850.5 L54 850.5" fill="none" stroke="#2a7ad0" stroke-width="3.4"/>
<path d="M53 858.5 Q50.5 852 58 846 Q64 842 67 844.5" fill="none" stroke="#e8b020" stroke-width="1.6"/>
<path d="M81.5 843 L87 858 L76 858 Z" fill="#f08a10"/><path d="M79.5 848 L83.5 848 L84.3 850.5 L78.7 850.5 Z M78 853 L85 853 L85.8 855.3 L77.2 855.3 Z" fill="#fff"/><rect x="75" y="857" width="13" height="2.5" fill="#e07000"/>
<path d="M101 843 L109 843 L111 845 L111 857 L109 859 L101 859 L99 857 L99 845 Z" fill="#0a2ad8"/><path d="M102.3 848.5 L107.7 853.8 L105 856.3 L105 845.7 L107.7 848.2 L102.3 853.5" fill="none" stroke="#fff" stroke-width="1.3"/>
<path d="M135.5 847 L139.5 851 L135.5 855 Z M140.5 847 L144.5 851 L140.5 855 Z" fill="#8ab0e8" stroke="#2a4a8a" stroke-width="0.8"/>
<rect x="150.5" y="842.5" width="157" height="19" rx="2.5" fill="#e6e6e6" stroke="#dcdcdc"/>
<ellipse cx="157.5" cy="851.5" rx="3" ry="4.5" fill="#3a3a6a"/><ellipse cx="168.5" cy="851.5" rx="3" ry="4.5" fill="#3a3a6a"/><circle cx="163" cy="850" r="6" fill="#8a4a20"/><ellipse cx="163" cy="852.5" rx="5" ry="5.5" fill="#f4e0b0"/><circle cx="161" cy="850.5" r="1" fill="#222"/><circle cx="165" cy="850.5" r="1" fill="#222"/><path d="M159.5 853 Q163 852.5 166.5 853 Q166 857 163 857 Q160 857 159.5 853 Z" fill="#802020"/>
<rect x="311.5" y="842.5" width="156" height="19" rx="2.5" fill="#e6e6e6" stroke="#dcdcdc"/>
<circle cx="323" cy="850.5" r="7.5" fill="url(#ff)"/><ellipse cx="324.5" cy="849" rx="3.5" ry="5" fill="#3a80d0"/><path d="M321 852 Q324 855 328 853" fill="none" stroke="#402018" stroke-width="1.2"/><path d="M316 853 Q319 858 325 858" fill="none" stroke="#8a2a20" stroke-width="1.5"/>
<rect x="470.5" y="842.5" width="158" height="17.5" rx="3" fill="#ececec" stroke="#9a9a9a"/>
<rect x="476.5" y="844.5" width="15" height="14.5" fill="#b8e0a8" stroke="#4a7a3a"/><rect x="478" y="846" width="12" height="11.5" fill="#e0f4d8"/><path d="M480 848 L488 856 M488 848 L480 856" stroke="#2a7a2a" stroke-width="2.6"/>
<text x="175" y="854.7" font-family="Liberation Sans" font-size="11.8" textLength="124" lengthAdjust="spacing" fill="#111">104. billy talent - surr...</text>
<text x="336" y="854.7" font-family="Liberation Sans" font-size="11.6" textLength="127.5" lengthAdjust="spacing" fill="#111">[Excel 2003] 2 Diagram...</text>
<text x="496" y="854.7" font-family="Liberation Sans" font-size="11.8" textLength="124" lengthAdjust="spacing" fill="#111">Microsoft Excel - Map...</text>
<text x="917" y="855.5" font-family="Liberation Sans" font-size="11.6" textLength="28.5" lengthAdjust="spacing" fill="#222">Progs</text>
<path d="M952 847 L956 851 L952 855 Z M957 847 L961 851 L957 855 Z" fill="#5a90e0" stroke="#2a4a8a" stroke-width="0.8"/>
<path d="M973 847 L968.5 851 L973 855 Z" fill="#8ab0e8" stroke="#2a4a8a" stroke-width="0.8"/>
<rect x="976" y="840" width="1" height="23" fill="#a8a8a8"/><rect x="977" y="840" width="1" height="23" fill="#fafafa"/>
<circle cx="993" cy="852" r="7.5" fill="url(#sph)"/><path d="M988 855 Q994 858 999 850" fill="none" stroke="#fff" stroke-width="1.5"/>
<ellipse cx="1005.5" cy="851.5" rx="3" ry="4.5" fill="#3a3a6a"/><ellipse cx="1016.5" cy="851.5" rx="3" ry="4.5" fill="#3a3a6a"/><circle cx="1011" cy="850" r="6" fill="#8a4a20"/><ellipse cx="1011" cy="852.5" rx="5" ry="5.5" fill="#f4e0b0"/><circle cx="1009" cy="850.5" r="1" fill="#222"/><circle cx="1013" cy="850.5" r="1" fill="#222"/><path d="M1007.5 853 Q1011 852.5 1014.5 853 Q1014 857 1011 857 Q1008 857 1007.5 853 Z" fill="#802020"/>
<ellipse cx="1025" cy="844.5" rx="2.5" ry="2" fill="#40a040"/><ellipse cx="1032" cy="844.5" rx="2.5" ry="2" fill="#40a040"/><ellipse cx="1025" cy="858" rx="2.5" ry="2" fill="#40a040"/><ellipse cx="1032" cy="858" rx="2.5" ry="2" fill="#40a040"/>
<rect x="1021.5" y="846.5" width="14" height="10" rx="2.5" fill="#fff" stroke="#c83030" stroke-width="1.4"/><text x="1023.3" y="854.6" font-family="Liberation Sans" font-weight="bold" font-size="7.5" fill="#111">NA</text>
<rect x="1040" y="844" width="15" height="15" fill="#111"/>
<rect x="1041" y="845.0" width="6" height="2" fill="#e81818"/><rect x="1048" y="845.0" width="6" height="2" fill="#189a28"/>
<rect x="1041" y="847.8" width="6" height="2" fill="#a02828"/><rect x="1048" y="847.8" width="6" height="2" fill="#207a30"/>
<rect x="1041" y="850.6" width="6" height="2" fill="#e81818"/><rect x="1048" y="850.6" width="6" height="2" fill="#189a28"/>
<rect x="1041" y="853.4" width="6" height="2" fill="#a02828"/><rect x="1048" y="853.4" width="6" height="2" fill="#207a30"/>
<rect x="1041" y="856.2" width="6" height="2" fill="#e81818"/><rect x="1048" y="856.2" width="6" height="2" fill="#18c818"/>
<path d="M1057 852 L1065 847 L1073 852 L1065 858 Z" fill="#e8eef8" stroke="#8a90a8"/><path d="M1058 855 L1065 860 L1072 855" fill="none" stroke="#c04040"/>
<circle cx="1083" cy="851.5" r="8" fill="url(#bird)"/><circle cx="1080" cy="850" r="2.3" fill="#fff"/><circle cx="1086" cy="850" r="2.3" fill="#fff"/><circle cx="1080.5" cy="850.5" r="1" fill="#000"/><circle cx="1086.5" cy="850.5" r="1" fill="#000"/><path d="M1080 855 L1086 855 L1083 858 Z" fill="#f0a020"/>
<text x="1098" y="857.8" font-family="Liberation Serif" font-weight="bold" font-size="20" fill="#000" letter-spacing="3">18</text>
<text x="1126" y="850.8" font-family="Liberation Serif" font-weight="bold" font-size="12.5" fill="#000" letter-spacing="0.5">31</text>
</svg>
</body></html>
